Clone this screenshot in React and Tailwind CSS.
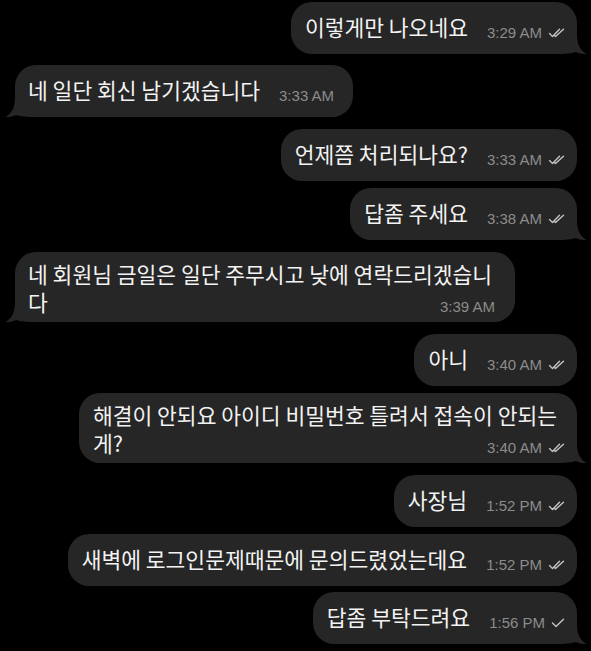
import clsx from "clsx";

const messages = [
    { out: true, lines: ["이렇게만 나오네요"], time: "3:29 AM", check: 2, tail: true, mt: "mt-0" },
    { out: false, lines: ["네 일단 회신 남기겠습니다"], time: "3:33 AM", tail: true, mt: "mt-[11px]" },
    { out: true, lines: ["언제쯤 처리되나요?"], time: "3:33 AM", check: 2, tail: false, mt: "mt-[12px]" },
    { out: true, lines: ["답좀 주세요"], time: "3:38 AM", check: 2, tail: true, mt: "mt-[7px]" },
    { out: false, lines: ["네 회원님 금일은 일단 주무시고 낮에 연락드리겠습니", "다"], time: "3:39 AM", tail: true, mt: "mt-[12px]" },
    { out: true, lines: ["아니"], time: "3:40 AM", check: 2, tail: false, mt: "mt-[12px]" },
    { out: true, lines: ["해결이 안되요 아이디 비밀번호 틀려서 접속이 안되는", "게?"], time: "3:40 AM", check: 2, tail: true, mt: "mt-[7px]" },
    { out: true, lines: ["사장님"], time: "1:52 PM", check: 2, tail: false, mt: "mt-[12px]" },
    { out: true, lines: ["새벽에 로그인문제때문에 문의드렸었는데요"], time: "1:52 PM", check: 2, tail: false, mt: "mt-[7px]" },
    { out: true, lines: ["답좀 부탁드려요"], time: "1:56 PM", check: 1, tail: true, mt: "mt-[6px]" },
];

const Check = ({ count }) =>
    count === 2 ? (
        <svg width="18" height="10" viewBox="0 0 18 10" fill="none" stroke="#c4c4c4" strokeWidth="1.4" strokeLinecap="round" strokeLinejoin="round" className="ml-[6px]">
            <path d="M1.5 5.5 L4.5 8.5 L11.5 1.2" />
            <path d="M6.5 7.5 L7.5 8.5 L15.5 1.2" />
        </svg>
    ) : (
        <svg width="15" height="10" viewBox="0 0 15 10" fill="none" stroke="#c4c4c4" strokeWidth="1.4" strokeLinecap="round" strokeLinejoin="round" className="ml-[6px]">
            <path d="M1.5 5 L5 8.5 L12.5 1.2" />
        </svg>
    );

const Meta = ({ m, className }) => (
    <span className={clsx("flex items-center shrink-0 whitespace-nowrap leading-none text-[15px] text-[#8c8c8c] font-['Liberation_Sans',sans-serif]", className)}>
        {m.time}
        {m.check && <Check count={m.check} />}
    </span>
);

// bubble tail, sits under the bubble content at the bottom corner
const Tail = ({ out }) => (
    <svg
        width="30"
        height="20"
        viewBox="0 0 30 20"
        className={clsx("absolute bottom-0", out ? "right-[-10px]" : "left-[-10px] -scale-x-100")}
    >
        <path d="M0 20 L0 0 L20 0 C20 9 22 15.5 29.5 20 C25.5 20.4 22 19.4 19 18 C14 19.6 8 20 0 20 Z" fill="#262626" />
    </svg>
);

const Bubble = ({ m }) => {
    const multi = m.lines.length > 1;
    const last = m.lines[m.lines.length - 1];
    return (
        <div className={clsx("flex", m.out ? "justify-end" : "justify-start", m.mt)}>
            <div
                className={clsx(
                    "relative rounded-[21px] bg-[#262626] text-[#f3f3f3] text-[21.5px]",
                    m.out ? "pl-[14px]" : "pl-[13px]",
                    multi && m.out && "pr-[20px] pt-[8px] pb-[7px]",
                    multi && !m.out && "pr-[23px] pt-[8px] pb-[7px]",
                    !multi && m.out && "pr-[11px] pt-[11px] pb-[14px]",
                    !multi && !m.out && "pr-[19px] pt-[11px] pb-[14px]"
                )}
            >
                {m.tail && <Tail out={m.out} />}
                {multi ? (
                    <div className="relative">
                        {m.lines.slice(0, -1).map((l) => (
                            <div key={l} className="leading-[27.5px] whitespace-nowrap">{l}</div>
                        ))}
                        <div className="flex items-end justify-between">
                            <span className="leading-[27.5px]">{last}</span>
                            <Meta m={m} className={clsx("mb-[1px]", m.out ? "mr-[-9px]" : "mr-[-3px]")} />
                        </div>
                    </div>
                ) : (
                    <div className="relative flex items-end">
                        <span className="leading-[27px] whitespace-nowrap">{last}</span>
                        <Meta m={m} className="ml-[19px]" />
                    </div>
                )}
            </div>
        </div>
    );
};

const App = () => {
    return (
        <div className="h-[651px] overflow-hidden bg-black pt-[2px] pl-[15px] pr-[14px] font-['Noto_Sans_CJK_KR',sans-serif]">
            {messages.map((m, i) => (
                <Bubble key={i} m={m} />
            ))}
        </div>
    );
};

export default App;
